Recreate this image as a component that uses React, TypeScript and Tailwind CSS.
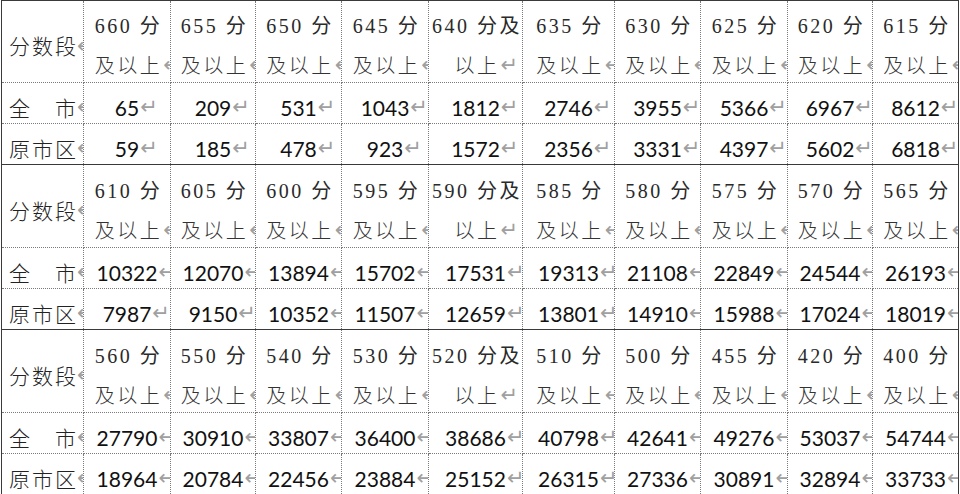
import React from "react";

type Group = {
  heads: string[];
  city: number[];
  urban: number[];
};

const groups: Group[] = [
  {
    heads: ["660", "655", "650", "645", "640", "635", "630", "625", "620", "615"],
    city: [65, 209, 531, 1043, 1812, 2746, 3955, 5366, 6967, 8612],
    urban: [59, 185, 478, 923, 1572, 2356, 3331, 4397, 5602, 6818],
  },
  {
    heads: ["610", "605", "600", "595", "590", "585", "580", "575", "570", "565"],
    city: [10322, 12070, 13894, 15702, 17531, 19313, 21108, 22849, 24544, 26193],
    urban: [7987, 9150, 10352, 11507, 12659, 13801, 14910, 15988, 17024, 18019],
  },
  {
    heads: ["560", "550", "540", "530", "520", "510", "500", "455", "420", "400"],
    city: [27790, 30910, 33807, 36400, 38686, 40798, 42641, 49276, 53037, 54744],
    urban: [18964, 20784, 22456, 23884, 25152, 26315, 27336, 30891, 32894, 33733],
  },
];

const Mark = () => (
  <span className="absolute left-full top-1/2 -translate-y-1/2 pl-[1px] font-['DejaVu_Sans',sans-serif] text-[21px] leading-none text-[#a0a0a0] tracking-normal font-normal">
    ↵
  </span>
);

function LabelCell({ chars, header, last }: { chars: string[]; header?: boolean; last?: boolean }) {
  return (
    <div
      className={`relative overflow-hidden border-r border-dotted border-r-[#7a7a7a] ${
        last ? "h-[40px]" : "border-b border-b-[#7a7a7a]"
      } flex items-center pt-[8px] ${header ? "h-full" : last ? "" : "h-[41px]"}`}
    >
      <div className="relative flex w-full justify-between px-[7px] font-['Noto_Sans_CJK_SC',sans-serif] text-[21px] leading-none text-[#222] font-light">
        {chars.map((c, i) => (
          <span key={i} className={i === chars.length - 1 ? "relative" : ""}>
            {c}
            {i === chars.length - 1 && <Mark />}
          </span>
        ))}
      </div>
    </div>
  );
}

function HeadCell({ score, wrap, lastCol }: { score: string; wrap: boolean; lastCol: boolean }) {
  const l1 = wrap ? `${score} 分及` : `${score} 分`;
  const l2 = wrap ? "以上" : "及以上";
  return (
    <div
      className={`relative overflow-hidden border-b border-dotted border-b-[#7a7a7a] ${
        lastCol ? "" : "border-r border-r-[#7a7a7a]"
      } flex flex-col items-center pt-[5px] font-['Liberation_Serif','Noto_Sans_CJK_SC',serif] text-[20px] tracking-[2.5px] text-[#2a2a2a] whitespace-nowrap`}
    >
      <div className="h-[41px] flex items-center pl-[3px]">{l1}</div>
      <div className="h-[36px] flex items-center pl-[3px] pt-[2px]">
        <span className="relative font-['Noto_Sans_CJK_SC',sans-serif] font-light text-[#333]">
          {l2}
          <Mark />
        </span>
      </div>
    </div>
  );
}

function NumCell({ n, last, lastCol }: { n: number; last: boolean; lastCol: boolean }) {
  return (
    <div
      className={`relative overflow-hidden border-dotted ${last ? "h-[40px]" : "h-[41px] border-b border-b-[#7a7a7a]"} ${
        lastCol ? "" : "border-r border-r-[#7a7a7a]"
      } flex items-center justify-center pt-[8px]`}
    >
      <span className="relative font-['Lato',sans-serif] text-[21px] leading-none text-[#111]">
        {n}
        <Mark />
      </span>
    </div>
  );
}

export default function App() {
  return (
    <div className="w-[960px] h-[494px] overflow-hidden bg-white">
      <div className="ml-[1px] w-[958px] border-l border-t border-r border-solid border-[#3a3a3a]">
        {groups.map((g, gi) => (
          <div
            key={gi}
            className="grid grid-cols-[82px_87px_85px_86px_87px_94px_92px_86px_87px_85px_85px] border-b border-solid border-[#3a3a3a]"
          >
            <div className={`grid ${gi === 0 ? "h-[82px]" : "h-[83px]"}`}>
              <LabelCell chars={["分", "数", "段"]} header />
            </div>
            {g.heads.map((h, i) => (
              <div key={i} className={`grid ${gi === 0 ? "h-[82px]" : "h-[83px]"}`}>
                <HeadCell score={h} wrap={i === 4} lastCol={i === 9} />
              </div>
            ))}
            <LabelCell chars={["全", "市"]} />
            {g.city.map((n, i) => (
              <NumCell key={i} n={n} last={false} lastCol={i === 9} />
            ))}
            <LabelCell chars={["原", "市", "区"]} last />
            {g.urban.map((n, i) => (
              <NumCell key={i} n={n} last lastCol={i === 9} />
            ))}
          </div>
        ))}
      </div>
    </div>
  );
}
